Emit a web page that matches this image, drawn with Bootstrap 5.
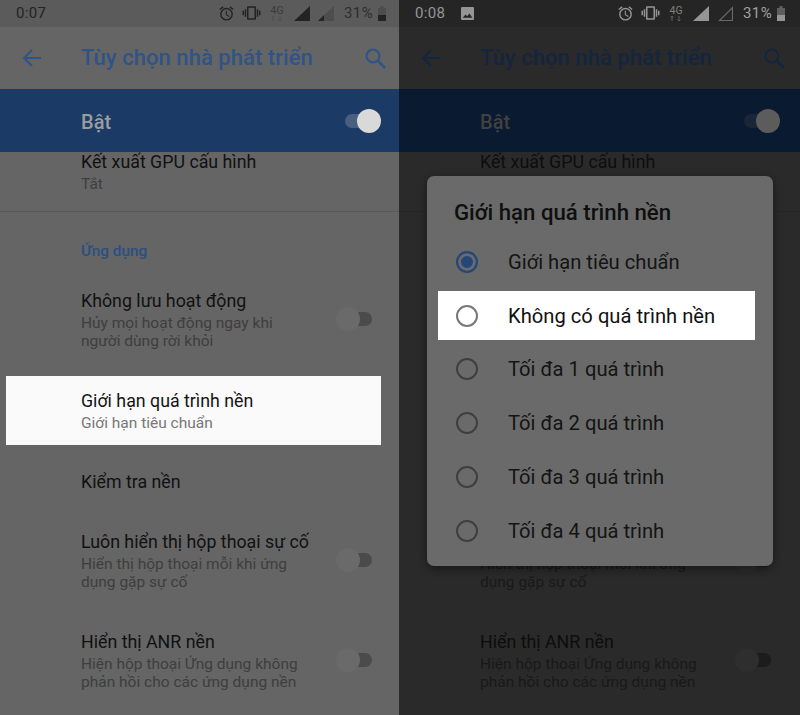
<!DOCTYPE html>
<html lang="vi">
<head>
<meta charset="utf-8">
<title>Tùy chọn nhà phát triển</title>
<link href="https://cdn.jsdelivr.net/npm/bootstrap@5.3.0/dist/css/bootstrap.min.css" rel="stylesheet">
<style>
html,body{margin:0;height:715px;overflow:hidden;background:#2a2a2a}
body{font-family:Roboto,"Noto Sans",sans-serif}
.screens{width:800px;height:715px;overflow:hidden}
.pane{position:relative;height:715px;overflow:hidden;background:var(--bg);flex:0 0 auto}
.pane-a{width:399px;--e:0px;--bg:#656565;--sbar:#5b5b5b;--stext:#232323;--accent:#2f5485;--band:#1b3a66;--bandtext:#9c9c9c;--knob:#d9d9d9;--ontrack:#4a5f80;--title:#111;--sub:#3e3e3e;--rule:#5a5a5a;--cat:#2a4f82;--offknob:#6a6a6a;--offtrack:#4b4b4b}
.pane-b{width:401px;--e:2px;--bg:#2a2a2a;--sbar:#252525;--stext:#959595;--accent:#14253f;--band:#0a1a30;--bandtext:#414141;--knob:#5c5c5c;--ontrack:#1a2536;--title:#0d0d0d;--sub:#191919;--rule:#262626;--cat:#12233c;--offknob:#2e2e2e;--offtrack:#1c1c1c}
.sbar{height:27px;background:var(--sbar);color:var(--stext);padding-left:16px;position:relative}
.sclock{font-size:15px;letter-spacing:.3px}
.sicons{position:absolute;left:0;top:0;width:400px;height:27px}
.sicons svg,.sicons span{position:absolute}
.spct{left:344px;top:3px;font-size:15px;line-height:21px;letter-spacing:.4px}
.tbar{height:62px;background:var(--bg);color:var(--accent)}
.tbar-title{font-size:22px;font-weight:500;margin-left:40px;line-height:30px;letter-spacing:.05px}
.tbar-back{margin-left:22px;width:19px;height:18px}
.tbar-search{margin-left:auto;margin-right:calc(13px + var(--e));width:21px;height:21px}
.onband{height:63px;background:var(--band);position:relative;z-index:1;padding-left:81px;color:var(--bandtext);font-size:20px;font-weight:500}
.onband-txt{padding-top:3px}
.lst{margin-top:-3px}
.itm{padding:1px 0 0 81px;position:relative;font-size:17.800px;line-height:24px;color:var(--title)}
.itm small{display:block;font-size:15.500px;line-height:18px;color:var(--sub);margin-top:1px}
.h-gpu{height:63px;border-bottom:1px solid var(--rule)}
.h-cat{height:76px;padding-top:27px;font-size:15.300px;font-weight:500;color:var(--cat)}
.h-kl{height:88px}
.h-hl{height:69px;margin:0 18px 0 6px;padding:13px 0 0 75px;background:#fafafa;color:#141414}
.h-hl small{color:#777}
.h-mid{height:153px}
.h-kt{height:84px;padding-top:25px}
.h-lu{height:100px}
.tgl{position:absolute;left:336px;top:19px;width:36px;height:24px}
.tgl i{position:absolute;left:12px;right:0;top:5px;height:14px;border-radius:7px;background:var(--offtrack)}
.tgl b{position:absolute;left:0;top:0;width:24px;height:24px;border-radius:50%;background:var(--offknob)}
.tgl-on{position:relative;width:36px;height:24px;margin-left:auto;margin-right:calc(18px + var(--e))}
.tgl-on i{position:absolute;left:0;right:10px;top:5px;height:14px;border-radius:7px;background:var(--ontrack)}
.tgl-on b{position:absolute;right:0;top:0;width:24px;height:24px;border-radius:50%;background:var(--knob)}
.dlg{position:absolute;left:28px;top:176px;width:346px;height:390px;background:#6a6a6a;border-radius:7px;box-shadow:0 3px 10px rgba(0,0,0,.45);padding:22px 18px 0 11px;color:#141414}
.dlg-title{font-size:22.200px;font-weight:500;line-height:28px;margin:0 0 9px 16px;color:#0f0f0f}
.opt{height:53.800px;font-size:20.200px;color:#141414;padding-left:2px}
.opt-lit{height:49px;margin:2.400px 0;background:#fff;color:#111}
.rdo{width:22px;height:22px;border:2px solid #3f3f3f;border-radius:50%;margin:0 30px 0 16px;flex:0 0 auto}
.opt-lit .rdo{border-color:#777}
.rdo-on{border-color:#24477a;background:#24477a;box-shadow:inset 0 0 0 3px #6a6a6a}
</style>
</head>
<body>
<svg width="0" height="0" class="d-block" aria-hidden="true">
  <symbol id="i-alarm" viewBox="0 0 24 24"><path fill="currentColor" d="M22 5.7l-4.6-3.9-1.3 1.5 4.6 3.9L22 5.7zM7.9 3.4L6.6 1.900 2 5.700l1.300 1.500 4.600-3.800zM12.500 8H11v6l4.700 2.900.8-1.200-4-2.400V8zM12 4a9 9 0 1 0 0 18 9 9 0 0 0 0-18zm0 16a7 7 0 1 1 0-14 7 7 0 0 1 0 14z"/></symbol>
  <symbol id="i-vib" viewBox="0 0 24 24"><path fill="currentColor" d="M0 15h2V9H0v6zm3 2h2V7H3v10zm19-8v6h2V9h-2zm-3 8h2V7h-2v10zM16.500 3h-9C6.700 3 6 3.700 6 4.500v15c0 .8.700 1.500 1.500 1.500h9c.8 0 1.500-.7 1.500-1.500v-15c0-.8-.7-1.500-1.500-1.500zM16 19H8V5h8v14z"/></symbol>
  <symbol id="i-back" viewBox="0 0 19 18"><path fill="none" stroke="currentColor" stroke-width="2" d="M19 9H2M10 1L2 9l8 8"/></symbol>
  <symbol id="i-search" viewBox="0 0 21 21"><circle cx="8" cy="8" r="6.500" fill="none" stroke="currentColor" stroke-width="2.200"/><path stroke="currentColor" stroke-width="2.500" d="M12.500 12.500l7.500 7.500"/></symbol>
  <symbol id="i-pic" viewBox="0 0 12 12"><path fill="currentColor" fill-rule="evenodd" d="M1 0h10a1 1 0 0 1 1 1v10a1 1 0 0 1-1 1H1a1 1 0 0 1-1-1V1a1 1 0 0 1 1-1zm.5 10h9L7.800 6 5.600 8.600 4.200 7z"/></symbol>
</svg>
<main class="screens d-flex">

  <section class="pane pane-a">
    <div class="sbar d-flex align-items-center">
      <span class="sclock">0:07</span>
      <div class="sicons">
        <svg style="left:218px;top:5px" width="17" height="17"><use href="#i-alarm"/></svg>
        <svg style="left:242px;top:4px" width="19" height="18"><use href="#i-vib"/></svg>
        <svg style="left:270px;top:5px" width="14" height="17" viewBox="0 0 14 17"><text x="0.500" y="9" font-size="10.500" font-family="Roboto" fill="#3a3a3a">4G</text><path d="M3 11v5M1.500 12.500L3 11l1.500 1.500M10 11v5M8.500 14.500L10 16l1.500-1.500" stroke="#4f4f4f" fill="none"/></svg>
        <svg style="left:294px;top:6px" width="16" height="15"><path d="M16 0v15H0z" fill="#232323"/></svg>
        <svg style="left:318px;top:6px" width="16" height="15"><path d="M16 0v15H0z" fill="#4d4d4d"/><path d="M6 9v6H0z" fill="#232323"/></svg>
        <span class="spct" style="color:#2e2e2e">31%</span>
        <svg style="left:378px;top:6px" width="8" height="15"><path d="M2.500 0h3v2h2.500v13H0V2h2.500z" fill="#4d4d4d"/><path d="M0 9h8v6H0z" fill="#232323"/></svg>
      </div>
    </div>
    <header class="tbar d-flex align-items-center">
      <svg class="tbar-back"><use href="#i-back"/></svg>
      <span class="tbar-title">Tùy chọn nhà phát triển</span>
      <svg class="tbar-search"><use href="#i-search"/></svg>
    </header>
    <div class="onband d-flex align-items-center">
      <span class="onband-txt">Bật</span>
      <span class="tgl-on"><i></i><b></b></span>
    </div>
    <div class="lst">
      <div class="itm h-gpu">Kết xuất GPU cấu hình<small>Tắt</small></div>
      <div class="itm h-cat">Ứng dụng</div>
      <div class="itm h-kl">Không lưu hoạt động<small>Hủy mọi hoạt động ngay khi<br>người dùng rời khỏi</small><span class="tgl"><i></i><b></b></span></div>
      <div class="itm h-hl">Giới hạn quá trình nền<small>Giới hạn tiêu chuẩn</small></div>
      <div class="itm h-kt">Kiểm tra nền</div>
      <div class="itm h-lu">Luôn hiển thị hộp thoại sự cố<small>Hiển thị hộp thoại mỗi khi ứng<br>dụng gặp sự cố</small><span class="tgl"><i></i><b></b></span></div>
      <div class="itm">Hiển thị ANR nền<small>Hiện hộp thoại Ứng dụng không<br>phản hồi cho các ứng dụng nền</small><span class="tgl"><i></i><b></b></span></div>
    </div>
  </section>

  <section class="pane pane-b">
    <div class="sbar d-flex align-items-center">
      <span class="sclock">0:08</span>
      <svg class="ms-3" width="13" height="13"><use href="#i-pic"/></svg>
      <div class="sicons">
        <svg style="left:218px;top:5px" width="17" height="17"><use href="#i-alarm"/></svg>
        <svg style="left:242px;top:4px" width="19" height="18"><use href="#i-vib"/></svg>
        <svg style="left:270px;top:5px" width="14" height="17" viewBox="0 0 14 17"><text x="0.500" y="9" font-size="10.500" font-family="Roboto" fill="#808080">4G</text><path d="M3 11v5M1.500 12.500L3 11l1.500 1.500M10 11v5M8.500 14.500L10 16l1.500-1.500" stroke="#5e5e5e" fill="none"/></svg>
        <svg style="left:294px;top:6px" width="16" height="15"><path d="M16 0v15H0z" fill="#959595"/></svg>
        <svg style="left:318px;top:6px" width="16" height="15"><path d="M15.500 1.500v13h-13z" fill="none" stroke="#6a6a6a" stroke-width="1.200"/></svg>
        <span class="spct" style="color:#a0a0a0">31%</span>
        <svg style="left:378px;top:6px" width="8" height="15"><path d="M2.500 0h3v2h2.500v13H0V2h2.500z" fill="#5e5e5e"/><path d="M0 9h8v6H0z" fill="#959595"/></svg>
      </div>
    </div>
    <header class="tbar d-flex align-items-center">
      <svg class="tbar-back"><use href="#i-back"/></svg>
      <span class="tbar-title">Tùy chọn nhà phát triển</span>
      <svg class="tbar-search"><use href="#i-search"/></svg>
    </header>
    <div class="onband d-flex align-items-center">
      <span class="onband-txt">Bật</span>
      <span class="tgl-on"><i></i><b></b></span>
    </div>
    <div class="lst">
      <div class="itm h-gpu">Kết xuất GPU cấu hình</div>
      <div class="h-cat"></div>
      <div class="h-kl"></div>
      <div class="h-mid"></div>
      <div class="itm h-lu">&nbsp;<small>Hiển thị hộp thoại mỗi khi ứng<br>dụng gặp sự cố</small><span class="tgl"><i></i><b></b></span></div>
      <div class="itm">Hiển thị ANR nền<small>Hiện hộp thoại Ứng dụng không<br>phản hồi cho các ứng dụng nền</small><span class="tgl"><i></i><b></b></span></div>
    </div>
    <div class="dlg" role="dialog">
      <h2 class="dlg-title">Giới hạn quá trình nền</h2>
      <div class="opt d-flex align-items-center"><span class="rdo rdo-on"></span>Giới hạn tiêu chuẩn</div>
      <div class="opt opt-lit d-flex align-items-center"><span class="rdo"></span>Không có quá trình nền</div>
      <div class="opt d-flex align-items-center"><span class="rdo"></span>Tối đa 1 quá trình</div>
      <div class="opt d-flex align-items-center"><span class="rdo"></span>Tối đa 2 quá trình</div>
      <div class="opt d-flex align-items-center"><span class="rdo"></span>Tối đa 3 quá trình</div>
      <div class="opt d-flex align-items-center"><span class="rdo"></span>Tối đa 4 quá trình</div>
    </div>
  </section>
</main>
<script src="https://cdn.jsdelivr.net/npm/bootstrap@5.3.0/dist/js/bootstrap.bundle.min.js"></script>
</body>
</html>
